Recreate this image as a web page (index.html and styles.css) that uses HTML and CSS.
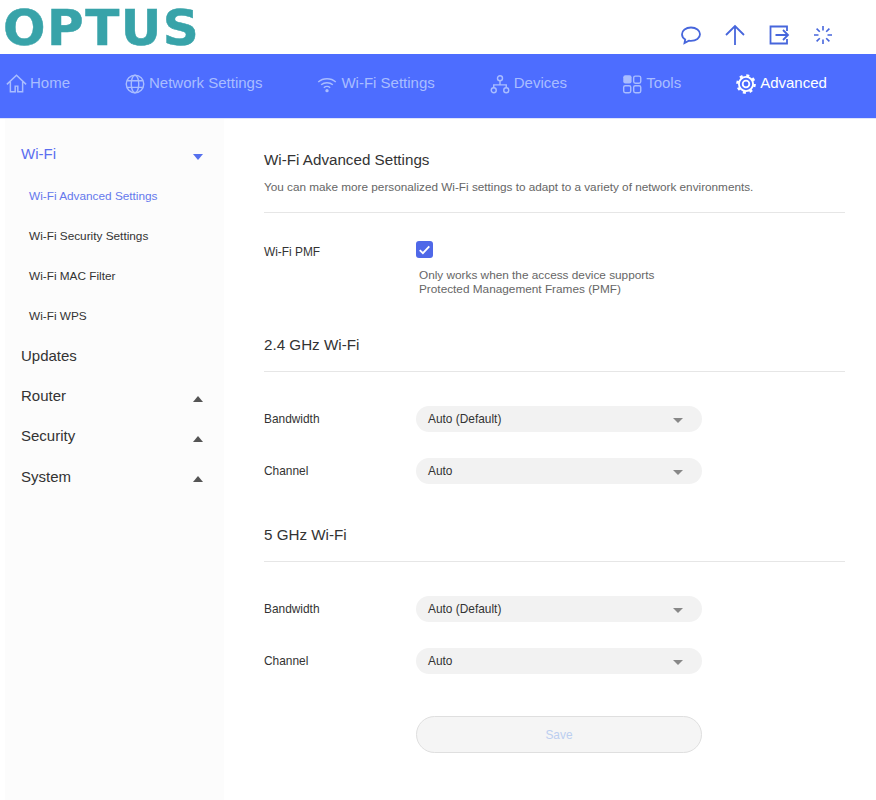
FILE: index.html
```html
<!DOCTYPE html>
<html lang="en">
<head>
<meta charset="utf-8">
<title>Wi-Fi Advanced Settings</title>
<link rel="stylesheet" href="styles.css">
</head>
<body>
<header class="top">
  <div class="logo">OPTUS</div>
  <div class="actions">
    <svg class="act" viewBox="0 0 24 24"><path d="M12 4.500c-5.200 0-9 3-9 6.800 0 2.200 1.200 4 3.200 5.200l-.7 3.600 4.400-2.400c.7.1 1.400.2 2.100.2 5.200 0 9-3 9-6.600s-3.800-6.800-9-6.800z"/></svg>
    <svg class="act" viewBox="0 0 24 24"><path d="M12 22V3M3 12l9-9 9 9"/></svg>
    <svg class="act" viewBox="0 0 24 24"><path d="M20 8V3.500H3.500v17H20V16M8.500 12H21M16 7l5 5-5 5"/></svg>
    <svg class="act thin" viewBox="0 0 24 24"><path d="M12 3v4.500M12 16.500V21M3 12h4.500M16.500 12H21M5.600 5.600l3.200 3.200M15.200 15.200l3.200 3.200M5.600 18.400l3.200-3.200M15.200 8.800l3.200-3.200"/></svg>
  </div>
</header>
<nav class="nav">
  <a class="nav-item home"><svg class="ni" viewBox="0 0 24 24"><path d="M1 13L12 2.500 23 13M5 10v11.500h5.500V15h3v6.500H19V10"/></svg>Home</a>
  <a class="nav-item"><svg class="ni" viewBox="0 0 24 24"><circle cx="12" cy="12" r="10.500"/><ellipse cx="12" cy="12" rx="4.500" ry="10.500"/><path d="M2.500 8h19M2.500 16h19"/></svg>Network Settings</a>
  <a class="nav-item"><svg class="ni" viewBox="0 0 24 24"><path d="M1.500 9.500c5.800-5.200 15.200-5.200 21 0M5 13c3.800-3.400 10.200-3.400 14 0M8.200 16.400c2.100-1.800 5.500-1.800 7.600 0" /><circle class="dot" cx="12" cy="20" r="2"/></svg>Wi-Fi Settings</a>
  <a class="nav-item"><svg class="ni" viewBox="0 0 24 24"><circle cx="12" cy="5" r="3"/><circle cx="4.500" cy="19.500" r="3"/><circle cx="19.500" cy="19.500" r="3"/><path d="M12 8v5M4.500 16.500V13h15v3.500"/></svg>Devices</a>
  <a class="nav-item"><svg class="ni" viewBox="0 0 24 24"><rect class="dot" x="1.500" y="1.500" width="10" height="10" rx="2.500"/><rect x="14" y="2.500" width="8.500" height="8.500" rx="2"/><rect x="2" y="14" width="8.500" height="8.500" rx="2"/><rect x="14" y="14" width="8.500" height="8.500" rx="2"/></svg>Tools</a>
  <a class="nav-item active"><svg class="ni gear" viewBox="0 0 24 24"><circle cx="12" cy="12" r="4"/><circle cx="12" cy="12" r="8.500"/><circle class="teeth" cx="12" cy="12" r="10.300"/></svg>Advanced</a>
</nav>
<div class="body">
  <aside class="side">
    <div class="group open"><span>Wi-Fi</span><i class="caret down"></i></div>
    <a class="sub current">Wi-Fi Advanced Settings</a>
    <a class="sub">Wi-Fi Security Settings</a>
    <a class="sub">Wi-Fi MAC Filter</a>
    <a class="sub">Wi-Fi WPS</a>
    <div class="group"><span>Updates</span></div>
    <div class="group"><span>Router</span><i class="caret up"></i></div>
    <div class="group"><span>Security</span><i class="caret up"></i></div>
    <div class="group last"><span>System</span><i class="caret up"></i></div>
  </aside>
  <main class="main">
    <h1 class="title">Wi-Fi Advanced Settings</h1>
    <p class="desc">You can make more personalized Wi-Fi settings to adapt to a variety of network environments.</p>
    <div class="rule"></div>
    <div class="pmf">
      <span class="label pmf-label">Wi-Fi PMF</span>
      <div>
        <span class="check"><svg viewBox="0 0 16 16"><path d="M3.500 8.500l3 3 6-6.500"/></svg></span>
        <p class="hint">Only works when the access device supports<br>Protected Management Frames (PMF)</p>
      </div>
    </div>

    <h2 class="section">2.4 GHz Wi-Fi</h2>
    <div class="rule"></div>
    <div class="rows">
      <div class="row"><span class="label">Bandwidth</span><div class="select"><span>Auto (Default)</span><i class="caret grey"></i></div></div>
      <div class="row"><span class="label">Channel</span><div class="select"><span>Auto</span><i class="caret grey"></i></div></div>
    </div>

    <h2 class="section s2">5 GHz Wi-Fi</h2>
    <div class="rule"></div>
    <div class="rows">
      <div class="row"><span class="label">Bandwidth</span><div class="select"><span>Auto (Default)</span><i class="caret grey"></i></div></div>
      <div class="row"><span class="label">Channel</span><div class="select"><span>Auto</span><i class="caret grey"></i></div></div>
    </div>
    <button class="save" type="button">Save</button>
  </main>
</div>
</body>
</html>
```
FILE: styles.css
```css
* { box-sizing: border-box; }
html, body { margin: 0; height: 800px; overflow: hidden; }
body { font-family: "Liberation Sans", Arial, sans-serif; background: #fff; color: #333; }

.top { height: 53px; display: flex; justify-content: space-between; }
.logo { font-family: "DejaVu Sans", sans-serif; font-weight: 700; font-size: 50px; line-height: 56px; color: #38a3a9; letter-spacing: 1.500px; margin-left: 3px; -webkit-text-stroke: 0.5px #38a3a9; }
.actions { display: flex; gap: 20px; padding: 23px 41px 0 0; }
.act { width: 24px; height: 24px; fill: none; stroke: #4766dc; stroke-width: 1.8; }
.act.thin { stroke-width: 1.6; }

.nav { height: 65px; margin-top: 1px; background: #4d6dff; display: flex; gap: 55px; padding-left: 6px; align-items: flex-start; border-bottom: 1px solid #dfe4fb; }
.nav-item { display: flex; align-items: center; gap: 4px; height: 56px; font-size: 15px; color: #a9bdff; }
.nav-item.home { gap: 3px; }
.nav-item.active { color: #fff; }
.ni { width: 20px; height: 20px; fill: none; stroke: currentColor; stroke-width: 1.7; margin-top: 3px; }
.ni .dot { fill: currentColor; stroke: none; }
.nav-item.home .ni { width: 21px; height: 21px; }
.gear { stroke-width: 2.200; }
.gear .teeth { stroke-width: 3; stroke-dasharray: 3.600 4.490; }

.body { display: flex; height: 682px; }
.side { width: 219px; margin-left: 5px; background: #fcfcfc; padding-top: 15px; flex: none; }
.group { height: 40px; display: flex; align-items: center; justify-content: space-between; padding: 0 21px 2px 16px; font-size: 15px; color: #333; }
.group.open { color: #5b6ef0; height: 41px; margin-bottom: 1px; }
.group.last { padding-bottom: 0; }
.sub { display: flex; align-items: center; height: 40px; padding-left: 24px; font-size: 11.800px; color: #333; }
.sub.current { color: #6478ec; }

.caret { width: 0; height: 0; border-left: 5px solid transparent; border-right: 5px solid transparent; display: block; }
.caret.down { border-top: 6px solid #5570ee; margin-top: 6px; }
.caret.up { border-bottom: 6px solid #555; margin-top: 8px; }
.group.last .caret.up { margin-top: 6px; }
.caret.grey { border-top: 5px solid #888; margin-top: 2px; }

.main { flex: none; width: 581px; margin-left: 40px; padding-top: 31px; }
.title { margin: 0; font-weight: 400; font-size: 15.200px; line-height: 20px; color: #333; }
.desc { margin: 8px 0 0; font-size: 11.750px; line-height: 18px; color: #666; }
.rule { height: 1px; background: #e6e6e6; margin-top: 16px; }

.label { font-size: 11.900px; color: #333; width: 152px; flex: none; }
.pmf { display: flex; margin-top: 28px; }
.pmf-label { margin-top: 4px; }
.check { display: block; width: 17px; height: 17px; border-radius: 3px; background: #4f68e8; }
.check svg { display: block; width: 17px; height: 17px; fill: none; stroke: #fff; stroke-width: 1.700; }
.hint { margin: 10px 0 0 3px; font-size: 11.800px; line-height: 14px; color: #666; }

.section { margin: 39px 0 0; font-weight: 400; font-size: 15.200px; line-height: 20px; color: #333; }
.section + .rule { margin-top: 16px; }
.s2 { margin-top: 41px; }
.rows { display: flex; flex-direction: column; gap: 26px; margin-top: 34px; }
.row { display: flex; align-items: center; }
.select { width: 286px; height: 26px; border-radius: 13px; background: #f2f2f2; display: flex; align-items: center; justify-content: space-between; padding: 0 19px 0 12px; font-size: 11.900px; color: #333; }

.save { display: block; width: 286px; height: 37px; margin: 42px 0 0 152px; border: 1px solid #dfdfdf; border-radius: 19px; background: #f5f5f5; color: #bccff0; font: 11.900px "Liberation Sans", Arial, sans-serif; }
```
